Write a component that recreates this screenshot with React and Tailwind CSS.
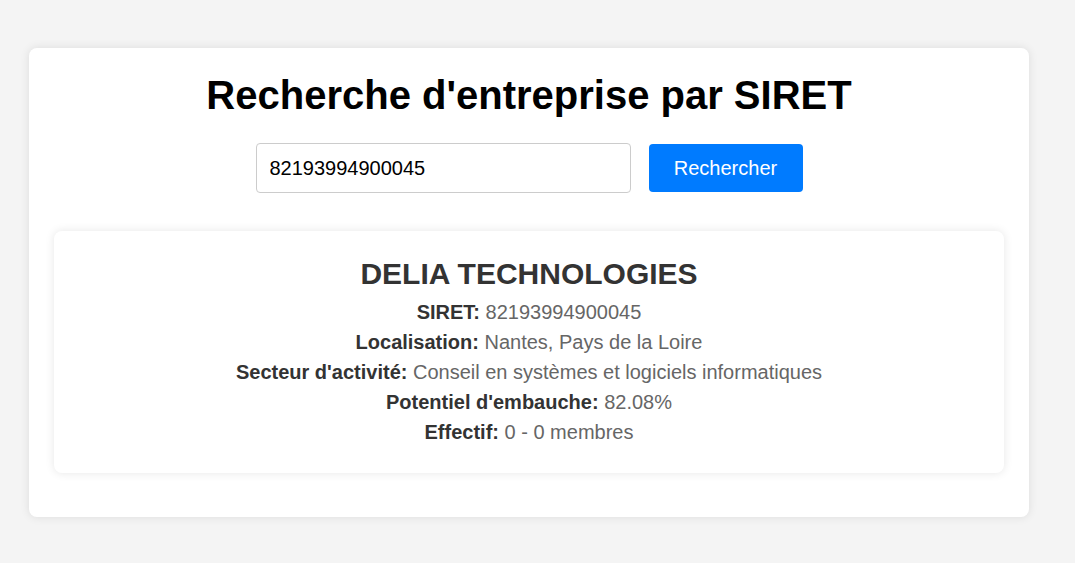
import React, { useState } from 'react';

const FONT = { fontFamily: '"Liberation Sans", Arial, sans-serif' };

function InfoLine({ label, value }) {
  return (
    <p className="text-[20px] leading-[30px] text-[#666]">
      <strong className="font-bold text-[#333]">{label}</strong> {value}
    </p>
  );
}

export default function App() {
  const [siret, setSiret] = useState('82193994900045');

  return (
    <div className="min-h-screen bg-[#f4f4f4] pt-[48px] pb-[46px]" style={FONT}>
      <div className="ml-[29px] w-[1000px] rounded-lg bg-white px-[25px] pt-[22px] pb-[44px] shadow-[0_0_10px_rgba(0,0,0,0.1)]">
        <h1 className="text-center text-[40px] font-bold leading-[50px] text-black">
          Recherche d'entreprise par SIRET
        </h1>

        <div className="mt-[23px] flex items-center justify-center gap-[18px]">
          <input
            type="text"
            value={siret}
            onChange={(e) => setSiret(e.target.value)}
            className="h-[50px] w-[375px] rounded border border-[#ccc] px-[13px] text-[20px] text-black outline-none"
          />
          <button
            type="button"
            className="h-[48px] w-[154px] rounded bg-[#007bff] text-[20px] text-white"
          >
            Rechercher
          </button>
        </div>

        <div className="mt-[38px] rounded-lg bg-white px-5 pt-[23px] pb-[26px] text-center shadow-[0_0_10px_rgba(0,0,0,0.1)]">
          <h2 className="mb-[3px] text-[30px] font-bold leading-[40px] text-[#333]">
            DELIA TECHNOLOGIES
          </h2>
          <InfoLine label="SIRET:" value="82193994900045" />
          <InfoLine label="Localisation:" value="Nantes, Pays de la Loire" />
          <InfoLine
            label="Secteur d'activité:"
            value="Conseil en systèmes et logiciels informatiques"
          />
          <InfoLine label="Potentiel d'embauche:" value="82.08%" />
          <InfoLine label="Effectif:" value="0 - 0 membres" />
        </div>
      </div>
    </div>
  );
}
